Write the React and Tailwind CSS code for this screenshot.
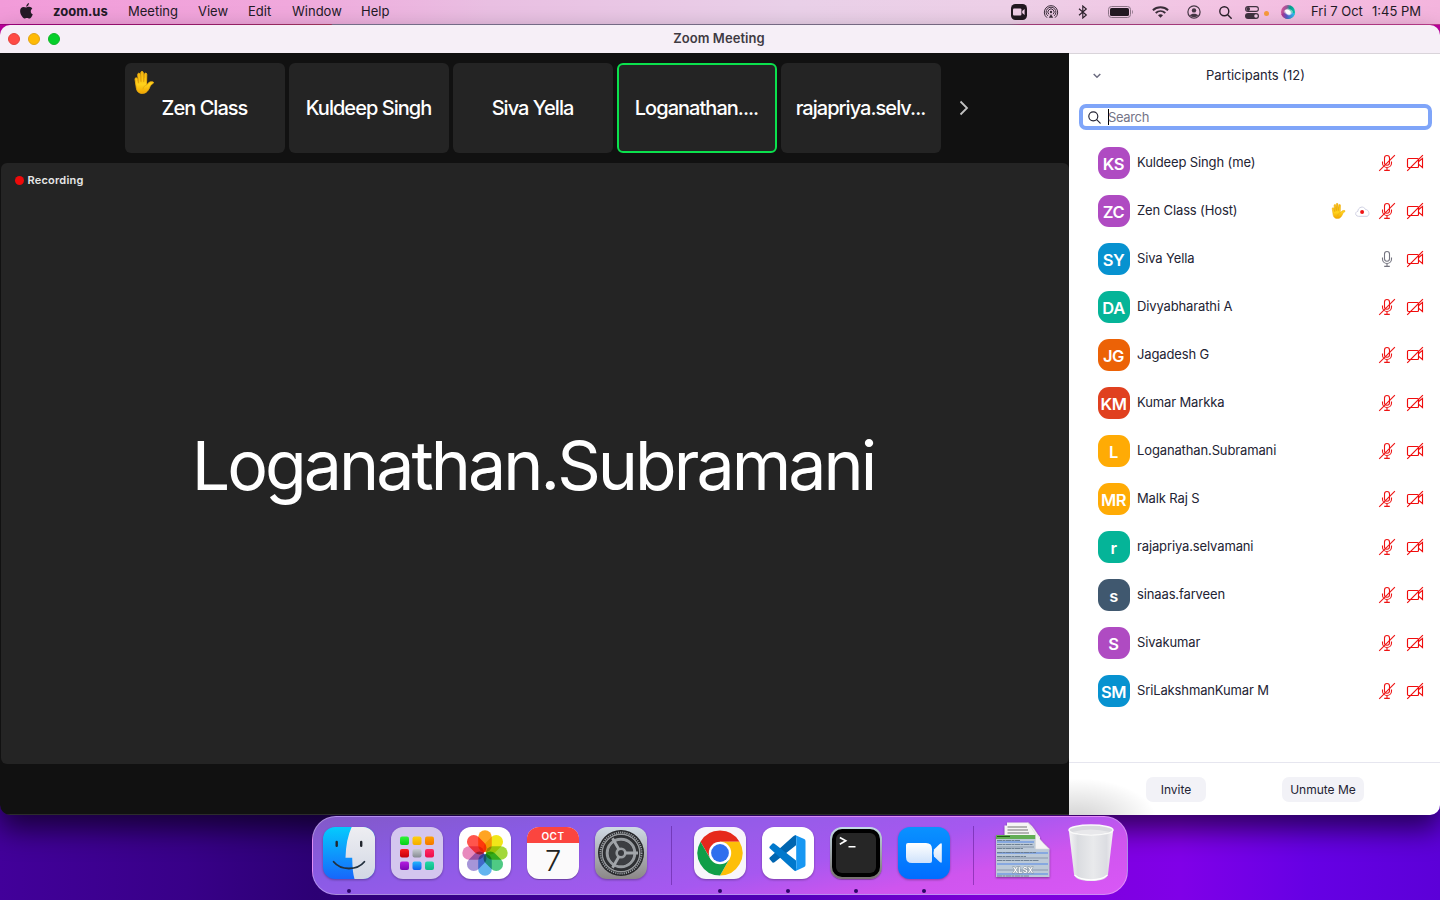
import React from "react";

const FONT = "font-['Inter','Liberation_Sans',sans-serif]";

/* ---------- menu bar icons ---------- */

const Apple = () => (
  <svg width="13" height="16" viewBox="0 0 13 16" fill="#231a26" className="shrink-0">
    <path d="M8.9 0C9 1.100 8.500 2.100 7.900 2.750 7.300 3.400 6.500 3.750 6.300 3.700 6.200 2.700 6.700 1.700 7.200 1.150 7.700.5 8.500.1 8.900 0Z" />
    <path d="M12.300 5.700C11.200 6.400 10.700 7.300 10.800 8.400c0 1.300.8 2.350 2 2.850-.3.900-.7 1.700-1.200 2.450-.7 1-1.300 1.800-2.200 1.800-.9 0-1.300-.5-2.500-.5s-1.600.5-2.500.5c-.9 0-1.600-.9-2.300-1.900C.9 11.800.1 9.800.1 7.900.1 5.300 1.800 3.900 3.500 3.900c1 0 1.900.6 2.700.6.7 0 1.700-.7 3-.7 1.200 0 2.400.7 3.100 1.900Z" />
  </svg>
);

const ZoomGlyph = () => (
  <svg width="16" height="16" viewBox="0 0 16 16" className="shrink-0">
    <rect width="16" height="16" rx="4.500" fill="#211820" />
    <rect x="2" y="4.600" width="8.400" height="6.800" rx="1" fill="#efcde6" />
    <path d="M11.200 7 13.600 5v6l-2.400-2Z" fill="#efcde6" />
  </svg>
);

const AirDrop = () => (
  <svg width="16" height="16" viewBox="0 0 16 16" fill="none" stroke="#3c2f3c" strokeWidth="1" className="shrink-0">
    <path d="M4 13.700A6.700 6.700 0 1 1 12 13.700" />
    <path d="M4.900 11.900A4.900 4.900 0 1 1 11.100 11.900" />
    <path d="M5.900 10.300A3.100 3.100 0 1 1 10.100 10.300" />
    <circle cx="8" cy="8" r="1.200" fill="#3c2f3c" stroke="none" />
    <path d="M8 10 10.200 13.800H5.800Z" fill="#3c2f3c" stroke="none" />
  </svg>
);

const Bluetooth = () => (
  <svg width="10" height="14" viewBox="0 0 10 14" fill="none" stroke="#2c212c" strokeWidth="1.150" className="shrink-0">
    <path d="M1 3.800 8.300 10 4.800 13V1L8.300 4 1 10.200" />
  </svg>
);

const Battery = () => (
  <svg width="26" height="12" viewBox="0 0 26 12" className="shrink-0">
    <rect x=".5" y=".5" width="22" height="11" rx="3" fill="none" stroke="#8d7588" />
    <rect x="2" y="2" width="19" height="8" rx="1.600" fill="#231a23" />
    <path d="M24 4c1.200.5 1.200 3.500 0 4Z" fill="#8d7588" />
  </svg>
);

const Wifi = () => (
  <svg width="17" height="12" viewBox="0 0 17 12" fill="none" stroke="#3a2d39" strokeWidth="1.900" className="shrink-0">
    <path d="M.9 4.200C5 .2 12 .2 16.100 4.200" />
    <path d="M3.700 7C6.500 4.500 10.500 4.500 13.300 7" />
    <path d="M6 9.200c1.500-1.300 3.500-1.300 5 0L8.500 11.800Z" fill="#3a2d39" stroke="none" />
  </svg>
);

const UserCircle = () => (
  <svg width="14" height="14" viewBox="0 0 14 14" className="shrink-0">
    <circle cx="7" cy="7" r="6.100" fill="none" stroke="#463745" strokeWidth="1.200" />
    <circle cx="7" cy="5.400" r="2.200" fill="#463745" />
    <path d="M2.900 10.500C4 8 10 8 11.100 10.500 9 12.600 5 12.600 2.900 10.500Z" fill="#463745" />
  </svg>
);

const Search = ({ color = "#2b202b", thin }) => (
  <svg width="13" height="13" viewBox="0 0 13 13" fill="none" stroke={color} strokeWidth={thin ? 1.15 : 1.4} strokeLinecap="round" className="shrink-0">
    <circle cx="5.300" cy="5.300" r="4.500" />
    <path d="m8.700 8.700 3.500 3.500" />
  </svg>
);

const ControlCentre = () => (
  <svg width="14" height="13" viewBox="0 0 14 13" className="shrink-0">
    <rect x=".6" y=".6" width="12.800" height="4.800" rx="2.400" fill="none" stroke="#403240" strokeWidth="1.100" />
    <circle cx="3.200" cy="3" r="1.900" fill="#403240" />
    <rect y="7" width="14" height="6" rx="3" fill="#403240" />
    <circle cx="11" cy="10" r="1.800" fill="#efc5e4" />
  </svg>
);

const Siri = () => (
  <svg width="14" height="14" viewBox="0 0 14 14" className="shrink-0">
    <defs>
      <linearGradient id="siriA" x1="0" y1="0" x2="1" y2=".3">
        <stop offset="0" stopColor="#e8509c" />
        <stop offset=".4" stopColor="#a05498" />
        <stop offset=".65" stopColor="#0a9a8c" />
        <stop offset="1" stopColor="#06c0a8" />
      </linearGradient>
      <linearGradient id="siriB" x1="0" y1="0" x2="1" y2="0">
        <stop offset="0" stopColor="#c62f83" />
        <stop offset=".4" stopColor="#5a58c8" />
        <stop offset="1" stopColor="#25c8f4" />
      </linearGradient>
    </defs>
    <circle cx="7" cy="7" r="7" fill="url(#siriA)" />
    <path d="M.3 9a7 7 0 0 0 13.400-.5Q7 6 .3 9Z" fill="url(#siriB)" />
    <path d="M2.600 6Q6 2 9 4.200q4 1.500 2.500 4Q9 11.500 6 9.800 2.800 8.500 2.600 6Z" fill="#fff" opacity=".45" />
    <path d="M4 5.300Q7 3.400 9.600 6.300q.8 3.300-1.600 3.500Q4.300 9.200 4 5.300Z" fill="#fff" />
  </svg>
);

/* ---------- meeting icons ---------- */

const Hand = ({ w, h }) => (
  <svg width={w} height={h} viewBox="0 0 20 23" className="shrink-0">
    <defs>
      <linearGradient id="hand" x1="0" y1="0" x2="0" y2="1">
        <stop offset="0" stopColor="#f5b50c" />
        <stop offset=".6" stopColor="#ffd21c" />
        <stop offset="1" stopColor="#f0a400" />
      </linearGradient>
    </defs>
    <path
      d="M1 8.300C.8 6.600 3 6.200 3.400 7.800l1 4.200L3.700 3.600C3.600 1.900 5.800 1.700 6 3.300l.9 7.200L6.800 1.700c0-1.700 2.400-1.700 2.500 0l.4 8.800.8-7.300c.2-1.600 2.400-1.400 2.300.2L12.500 14l1.700-1.800c1.200-1.300 2.800-1.700 4.700-1.300.9.200.8 1.200 0 1.600-1.400.7-2.100 1.500-2.800 2.900-1.700 4-3.500 7-7.800 7-3.300 0-5.300-1.700-5.900-5Z"
      fill="url(#hand)"
      stroke="#f0b010"
      strokeWidth=".9"
    />
    <path d="M4.600 12V7M7.100 10.800V5M9.700 10.800l.2-5M9 18c.3-2.200 1.500-3.500 3.500-4" fill="none" stroke="#d89a08" strokeWidth=".5" strokeLinecap="round" />
  </svg>
);

const Mic = ({ muted }) => {
  const c = muted ? "#ee1414" : "#74747f";
  return (
    <svg width="18" height="18" viewBox="0 0 18 18" fill="none" stroke={c} strokeWidth="1.100" className="shrink-0">
      <rect x="6.500" y="1.500" width="5" height="9.800" rx="2.500" />
      <path d="M4.500 7.500v1.500a4.500 4.500 0 0 0 9 0V7.500M9 13.500v2.800M6.200 16.400h5.600" />
      {muted && <path d="M1.200 16.900 16.900 1.200" />}
    </svg>
  );
};

const CameraOff = () => (
  <svg width="18" height="18" viewBox="0 0 18 18" fill="none" stroke="#f00c0c" strokeWidth="1.150" className="shrink-0">
    <rect x="1.500" y="4.500" width="11" height="9" rx="1" />
    <path d="m12.700 7.500 3.800-3.100v9.100l-3.800-3.100" />
    <path d="M1.200 16.900 16.900 1.200" />
  </svg>
);

const CloudRec = () => (
  <svg width="15" height="11" viewBox="0 0 15 11" className="shrink-0">
    <path d="M3.500 10.300C-.2 10.300-.1 5.600 2.800 5.400 3 1 8.600-.8 10.600 3.600c3.300-.2 4.700 5.500 1.600 6.700Z" fill="#fff" stroke="#cfd0e2" strokeWidth="1" />
    <circle cx="7.100" cy="6" r="2" fill="#ef1515" />
  </svg>
);

/* ---------- dock icons ---------- */

const Svg52 = ({ children }) => (
  <svg width="52" height="52" viewBox="0 0 52 52" className="shrink-0 overflow-visible drop-shadow-[0_1px_1px_rgba(0,0,0,0.3)]">
    {children}
  </svg>
);

const Finder = () => (
  <Svg52>
    <defs>
      <linearGradient id="fb" x1="0" y1="0" x2="0" y2="1">
        <stop offset="0" stopColor="#04cbfd" />
        <stop offset="1" stopColor="#1767fb" />
      </linearGradient>
      <linearGradient id="fw" x1="0" y1="0" x2="0" y2="1">
        <stop offset="0" stopColor="#eeeef2" />
        <stop offset="1" stopColor="#d2d8e4" />
      </linearGradient>
    </defs>
    <rect width="52" height="52" rx="12" fill="url(#fb)" />
    <path d="M28.700 0H40a12 12 0 0 1 12 12v28a12 12 0 0 1-12 12h-8.500Q29.500 46 29.200 30.800H22.500Q23 12 28.700 0Z" fill="url(#fw)" />
    <path d="M10.600 34.800Q16 41.500 26 41.500T41.400 34.800" fill="none" stroke="#22303e" strokeWidth="1.800" strokeLinecap="round" />
    <path d="M13.700 15v3.800M38.200 15v3.800" stroke="#22262e" strokeWidth="2.400" strokeLinecap="round" />
  </Svg52>
);

const TILES = [
  ["#2ff33a", "#07cf17"], ["#ffd010", "#f5ac00"], ["#ffa000", "#f57600"],
  ["#fb1e1e", "#c4000c"], ["#c8ccd2", "#858a92"], ["#ff2a62", "#ec0b4c"],
  ["#b41ce0", "#7d06b4"], ["#22b7fb", "#0b5cf0"], ["#22d8a8", "#0fb886"],
];

const Launchpad = () => (
  <Svg52>
    <rect width="52" height="52" rx="12" fill="#d4c6ee" />
    {TILES.map(([a, b], i) => (
      <g key={i}>
        <linearGradient id={`lp${i}`} x1="0" y1="0" x2="0" y2="1">
          <stop offset="0" stopColor={a} />
          <stop offset="1" stopColor={b} />
        </linearGradient>
        <rect x={9 + (i % 3) * 12.500} y={9.500 + Math.floor(i / 3) * 12.500} width="9" height="8.500" rx="2" fill={`url(#lp${i})`} />
      </g>
    ))}
  </Svg52>
);

const PETALS = ["#ff9a0a", "#f0e400", "#98d424", "#3cc476", "#52acee", "#9c8ad4", "#e67cb6", "#ff4238"];

const Photos = () => (
  <Svg52>
    <rect width="52" height="52" rx="12" fill="#fff" />
    <g className="isolate">
      {PETALS.map((c, i) => (
        <rect key={c} x="19.200" y="3.300" width="13.600" height="22" rx="6.800" fill={c} opacity=".9" transform={`rotate(${i * 45} 26 26)`} className="mix-blend-multiply" />
      ))}
    </g>
    <circle cx="26" cy="26" r="1" fill="#fff" />
  </Svg52>
);

const Calendar = () => (
  <div className="flex h-[52px] w-[52px] shrink-0 flex-col items-center overflow-hidden rounded-[12px] bg-[#fbfafb] shadow-[0_1px_1px_rgba(0,0,0,0.3)]">
    <div className="flex h-[16px] w-full shrink-0 items-center justify-center bg-[#fb453f] pt-[2px] text-[10px] font-semibold leading-[12px] tracking-[0.5px] text-white">OCT</div>
    <div className="text-[29px] font-light leading-[35px] text-[#222]">7</div>
  </div>
);

const Settings = () => (
  <Svg52>
    <defs>
      <linearGradient id="sg" x1="0" y1="0" x2="0" y2="1">
        <stop offset="0" stopColor="#cfdae4" />
        <stop offset="1" stopColor="#8b8787" />
      </linearGradient>
    </defs>
    <rect width="52" height="52" rx="12" fill="url(#sg)" />
    <circle cx="26" cy="26" r="23" fill="#26272a" />
    <circle cx="26" cy="26" r="20.600" fill="none" stroke="#9ba0a5" strokeWidth="1.800" strokeDasharray="1.200 .97" />
    <circle cx="26" cy="26" r="18.800" fill="none" stroke="#96999c" strokeWidth="1.400" />
    <circle cx="26" cy="26" r="17.600" fill="#2e3033" />
    <circle cx="26" cy="26" r="13.800" fill="none" stroke="#989ca0" strokeWidth="3" />
    <circle cx="26" cy="26" r="12" fill="#3c3e42" />
    <circle cx="26" cy="26" r="5.600" fill="#989ca0" />
    <path d="M28 26H43M25 24.300 17.500 11.200M25 27.700 17.500 40.800" stroke="#a2a6aa" strokeWidth="2.800" />
    <circle cx="26" cy="26" r="3" fill="#36383c" />
  </Svg52>
);

const Chrome = () => (
  <Svg52>
    <rect width="52" height="52" rx="12" fill="#f8f5fb" />
    <g transform="translate(26 26)">
      <path d="M-19.500-11.250A22.500 22.500 0 0 1 19.500-11.250H0L-9.700 5.600Z" fill="#e6291c" />
      <path d="M-19.500-11.250A22.500 22.500 0 0 1 19.500-11.250H0L-9.700 5.600Z" fill="#fdbf08" transform="rotate(120)" />
      <path d="M-19.500-11.250A22.500 22.500 0 0 1 19.500-11.250H0L-9.700 5.600Z" fill="#109e48" transform="rotate(240)" />
      <circle r="11.200" fill="#fff" />
      <circle r="8.900" fill="#2f6fee" />
    </g>
  </Svg52>
);

const VSCode = () => (
  <Svg52>
    <rect width="52" height="52" rx="12" fill="#fff" />
    <path d="M7.700 32.200 10.500 35.500Q11.500 36 12.500 35.200L34 18.200V8Q32.500 8 31 9.500L7.700 30.500Q7 31.300 7.700 32.200Z" fill="#0065b0" />
    <path d="M7.700 19.600 10.500 16.500Q11.500 16 12.500 16.700L34 33.500V44Q32.500 44 31 42.500L7.700 21.200Q7 20.500 7.700 19.600Z" fill="#0078cc" />
    <path d="M33 8 42.200 12Q43.500 12.700 43.500 14V38Q43.500 39.300 42.200 40L33 44.200Q34.200 43 34.200 41V11Q34.200 9 33 8Z" fill="#1797f2" />
  </Svg52>
);

const Terminal = () => (
  <div className="h-[52px] w-[52px] shrink-0 rounded-[12px] bg-gradient-to-b from-[#c3dbe6] to-[#77716f] p-[2px] shadow-[0_1px_1px_rgba(0,0,0,0.3)]">
    <div className="h-full w-full rounded-[10px] bg-black p-[4px]">
      <div className="h-full w-full rounded-[6px] bg-[#262626] pl-[3px] pt-[1px]">
        <svg width="18" height="14" viewBox="0 0 18 14" fill="none" stroke="#fff" strokeWidth="1.600">
          <path d="m.8 3.500 6 3.300-6 3.500M9.500 12.700h7" />
        </svg>
      </div>
    </div>
  </div>
);

const ZoomApp = () => (
  <Svg52>
    <defs>
      <linearGradient id="za" x1="0" y1="0" x2="0" y2="1">
        <stop offset="0" stopColor="#0a92ff" />
        <stop offset="1" stopColor="#006dff" />
      </linearGradient>
      <linearGradient id="zw" x1="0" y1="0" x2="0" y2="1">
        <stop offset="0" stopColor="#fff" />
        <stop offset="1" stopColor="#cfe2fb" />
      </linearGradient>
    </defs>
    <rect width="52" height="52" rx="12" fill="url(#za)" />
    <path d="M10 16H28Q34 16 34 22V34Q34 36 32 36H14Q8 36 8 30V18Q8 16 10 16Z" fill="url(#zw)" />
    <path d="M36 22.500 42 16.700Q43.800 15.500 43.800 17.500V34.500Q43.800 36.500 42 35.300L36 29.500Q35 26 36 22.500Z" fill="url(#zw)" />
  </Svg52>
);

const Sheets = () => (
  <svg width="54" height="56" viewBox="0 0 54 56" className="shrink-0 drop-shadow-[0_1px_1px_rgba(0,0,0,0.4)]">
    <path d="M11 .5H32L44 15V30H8.500V3.500H11Z" fill="#f5f5f5" />
    <path d="M11.500 5H31M11.500 8H32M11.500 11H33" stroke="#b4b4b4" strokeWidth="2" />
    <path d="M0 13H40V27H53.500V55H0Z" fill="#bccad8" />
    <path d="M0 13H40V17H0Z" fill="#62ad55" />
    <path d="M1 14.500H14" stroke="#24571d" strokeWidth="1" />
    {[20, 25, 31, 36, 42, 48, 52].map((y, i) => (
      <path key={y} d={`M1 ${y}H${y < 27 ? 38 : 52}`} stroke={i % 2 === 0 ? "#86a8e0" : "#a3b1c2"} strokeWidth="2" />
    ))}
    {[18.5, 22.5, 26.5, 30.5, 34.5, 38.5, 54].map((y, i) => (
      <path key={y} d={`M1 ${y}H${24 + ((i * 13) % 23)}`} stroke="#66788c" strokeWidth=".9" strokeDasharray="5 .5 3 .5" />
    ))}
    <path d="M32 .5Q39 6 43 16 46 20 53.500 27H39.500V12Z" fill="#f4f4f4" stroke="#d4d4d4" strokeWidth=".5" />
    <text x="27" y="50.500" textAnchor="middle" fontSize="7.500" fontWeight="600" letterSpacing=".2" fill="#fff" stroke="#84909b" strokeWidth="1" paintOrder="stroke">XLSX</text>
  </svg>
);

const Trash = () => (
  <svg width="46" height="58" viewBox="0 0 46 58" className="shrink-0">
    <defs>
      <linearGradient id="tr" x1="0" y1="0" x2="1" y2="0">
        <stop offset="0" stopColor="#f5f4f6" />
        <stop offset=".2" stopColor="#dadce0" />
        <stop offset=".55" stopColor="#e9eaec" />
        <stop offset=".85" stopColor="#dcdde2" />
        <stop offset="1" stopColor="#f4f2f5" />
      </linearGradient>
    </defs>
    <path d="M.8 6 6 50Q7 57 23 57T40 50L45.200 6Z" fill="url(#tr)" />
    <path d="M6.500 51Q12 55.800 23 55.800T39.500 51" fill="none" stroke="#fff" strokeWidth="1.200" />
    <ellipse cx="23" cy="6" rx="22" ry="5" fill="#d9dadf" stroke="#fafafa" strokeWidth="1.500" />
    <path d="M4 8Q22 3 42 8 23 13 4 8Z" fill="#e8e8eb" />
  </svg>
);

/* ---------- data ---------- */

const MENUS = [
  ["zoom.us", "w-[55px] mr-[20px] font-bold"],
  ["Meeting", "w-[50px] mr-[20px]"],
  ["View", "w-[30px] mr-[20px]"],
  ["Edit", "w-[24px] mr-[20px]"],
  ["Window", "w-[49px] mr-[20px]"],
  ["Help", "w-[30px]"],
];

const TILE_NAMES = ["Zen Class", "Kuldeep Singh", "Siva Yella", "Loganathan....", "rajapriya.selv..."];

const PEOPLE = [
  { name: "Kuldeep Singh (me)", tag: "KS", bg: "bg-[#af4bc2]" },
  { name: "Zen Class (Host)", tag: "ZC", bg: "bg-[#af4bc2]", host: true },
  { name: "Siva Yella", tag: "SY", bg: "bg-[#0792d0]", live: true },
  { name: "Divyabharathi A", tag: "DA", bg: "bg-[#05b498]" },
  { name: "Jagadesh G", tag: "JG", bg: "bg-[#ec6206]" },
  { name: "Kumar Markka", tag: "KM", bg: "bg-[#e0401f]" },
  { name: "Loganathan.Subramani", tag: "L", bg: "bg-[#ffab05]" },
  { name: "Malk Raj S", tag: "MR", bg: "bg-[#ffab05]" },
  { name: "rajapriya.selvamani", tag: "r", bg: "bg-[#05b498]" },
  { name: "sinaas.farveen", tag: "s", bg: "bg-[#40586f]" },
  { name: "Sivakumar", tag: "S", bg: "bg-[#af4bc2]" },
  { name: "SriLakshmanKumar M", tag: "SM", bg: "bg-[#0792d0]" },
];

/* ---------- sections ---------- */

const MenuBar = () => (
  <header className="flex h-[24px] shrink-0 items-center bg-[linear-gradient(90deg,#f29bd9_0%,#f0a8dc_20%,#e9bfe2_34%,#e9d0e8_55%,#edcfe7_70%,#f3c3e3_85%,#f4b4dd_100%)] pl-[20px] text-[13px] leading-[22px] text-[#231a26]">
    <span className="mb-[2px] flex"><Apple /></span>
    <nav className="mb-[2px] ml-[20px] flex">
      {MENUS.map(([label, cls]) => (
        <span key={label} className={`whitespace-nowrap ${cls}`}>{label}</span>
      ))}
    </nav>
    <div className="ml-auto flex items-center">
      <ZoomGlyph />
      <span className="ml-[16px] flex"><AirDrop /></span>
      <span className="ml-[19px] flex"><Bluetooth /></span>
      <span className="ml-[20px] flex"><Battery /></span>
      <span className="ml-[18px] flex"><Wifi /></span>
      <span className="ml-[18px] flex"><UserCircle /></span>
      <span className="ml-[18px] flex"><Search /></span>
      <span className="ml-[13px] flex"><ControlCentre /></span>
      <span className="ml-[5px] mt-[2px] h-[5px] w-[5px] rounded-full bg-[#f79a3c]" />
      <span className="ml-[12px] flex"><Siri /></span>
      <span className="mb-[2px] ml-[16px] w-[53px] whitespace-nowrap">Fri 7 Oct</span>
      <span className="mb-[2px] ml-[8px] mr-[18px] w-[50px] whitespace-nowrap">1:45 PM</span>
    </div>
  </header>
);

const Stage = () => (
  <main className="flex w-[1069px] shrink-0 flex-col border-b border-[#2c2c2c] bg-[#111] pl-px">
    <div className="flex h-[110px] shrink-0 items-center pl-[124px]">
      <div className="flex gap-[4px]">
        {TILE_NAMES.map((name, i) => (
          <div
            key={name}
            className={`relative flex h-[90px] w-[160px] items-center justify-center rounded-[6px] bg-[#242424] pr-px text-[20px] font-medium tracking-[-0.97px] text-white ${i === 3 ? "border-2 border-[#0be14d]" : ""}`}
          >
            {i === 0 && <span className="absolute left-[9px] top-[8px]"><Hand w={20} height={23} h={23} /></span>}
            {name}
          </div>
        ))}
      </div>
      <svg width="10" height="16" viewBox="0 0 10 16" fill="none" stroke="#c2c2c2" strokeWidth="1.800" className="ml-[18px]">
        <path d="m1.500 1.500 6.500 6.500-6.500 6.500" />
      </svg>
    </div>
    <section className="flex h-[601px] shrink-0 flex-col rounded-[6px] bg-[#242424]">
      <div className="flex h-[34px] shrink-0 items-center pl-[13.5px] text-[11px] font-semibold tracking-[0.22px] text-[#e6e6e6]">
        <span className="mr-[4px] h-[9px] w-[9px] rounded-full bg-[#ee0a0a]" />
        <span>Recording</span>
      </div>
      <div className="flex flex-1 items-center justify-center pb-[32px] pr-[4px] text-[68px] tracking-[-2.95px] text-white">Loganathan.Subramani</div>
    </section>
  </main>
);

const Participants = () => (
  <aside className="flex flex-1 flex-col border-t border-[#d9d4da] bg-white text-[13px] text-[#232333]">
    <div className="grid h-[44px] shrink-0 grid-cols-[56px_1fr_54px] items-center">
      <svg width="8" height="6" viewBox="0 0 8 6" fill="none" stroke="#6e6e82" strokeWidth="1.500" className="ml-[24px]">
        <path d="m.7 1 3.300 3.300L7.300 1" />
      </svg>
      <span className="text-center">Participants (12)</span>
    </div>
    <div className="ml-[10px] mr-[8px] mt-[6px] flex h-[26px] shrink-0 items-center rounded-[7px] border-[4px] border-[#7fa5f9] bg-white pl-[5px]">
      <Search color="#232333" thin />
      <span className="ml-[7px] h-[16px] w-px bg-black" />
      <span className="ml-[-1px] mt-[2px] tracking-[-0.35px] text-[#747487]">Search</span>
    </div>
    <ul className="mt-[9px] flex flex-1 flex-col">
      {PEOPLE.map((p) => (
        <li key={p.name} className="flex h-[48px] shrink-0 items-center pl-[29px] pr-[16px]">
          <span className={`flex h-[32px] w-[32px] items-center justify-center rounded-[11px] pr-px pt-[3px] text-[16.5px] font-semibold tracking-[-0.4px] text-white ${p.bg}`}>{p.tag}</span>
          <span className="ml-[7px] flex-1 whitespace-nowrap tracking-[-0.13px]">{p.name}</span>
          {p.host && (
            <span className="mr-[8px] flex items-center gap-[9px]">
              <Hand w={15} h={16} />
              <CloudRec />
            </span>
          )}
          <Mic muted={!p.live} />
          <span className="ml-[10px] flex"><CameraOff /></span>
        </li>
      ))}
    </ul>
    <footer className="flex h-[53px] shrink-0 items-center border-t border-[#e6e6ef] bg-[radial-gradient(ellipse_80px_42px_at_8px_110%,rgba(0,0,0,0.18),transparent)] pl-[77px] text-[12px]">
      <button className="h-[25px] w-[60px] rounded-[7px] bg-[#f2f2f7] pt-[2px]">Invite</button>
      <button className="ml-[76px] h-[25px] w-[82px] rounded-[7px] bg-[#f2f2f7] pt-[2px]">Unmute Me</button>
    </footer>
  </aside>
);

const Dot = ({ on, children }) => (
  <div className="flex flex-col items-center">
    {children}
    <span className={`mt-[10px] h-[4px] w-[4px] rounded-full ${on ? "bg-[#2b0568]" : "bg-transparent"}`} />
  </div>
);

const Divider = () => <span className="mt-[-1px] h-[59px] w-px bg-[#4a108070]" />;

const Dock = () => (
  <div className="mx-auto mt-px flex h-[79px] w-[816px] shrink-0 items-start rounded-[24px] border border-[#ffffff50] bg-[linear-gradient(168deg,#8259c8_0%,#8a5be6_25%,#9a5bea_45%,#a658f0_60%,#cf55ee_78%,#d957f6_100%)] pl-[10px] pt-[10px]">
    <div className="flex gap-[16px]">
      <Dot on><Finder /></Dot>
      <Dot><Launchpad /></Dot>
      <Dot><Photos /></Dot>
      <Dot><Calendar /></Dot>
      <Dot><Settings /></Dot>
    </div>
    <span className="ml-[24px] mr-[22px] flex"><Divider /></span>
    <div className="flex gap-[16px]">
      <Dot on><Chrome /></Dot>
      <Dot on><VSCode /></Dot>
      <Dot on><Terminal /></Dot>
      <Dot on><ZoomApp /></Dot>
    </div>
    <span className="ml-[23px] mr-[22px] flex"><Divider /></span>
    <span className="mt-[-5px] flex"><Sheets /></span>
    <span className="ml-[18px] mt-[-3px] flex"><Trash /></span>
  </div>
);

export default function App() {
  return (
    <div className={`flex h-[900px] w-[1440px] flex-col overflow-hidden bg-[linear-gradient(90deg,#42009a_0%,#380088_13%,#2c0074_22%,#3f0098_40%,#5200ba_55%,#7c00d6_68%,#8000e8_82%,#6600e4_91%,#5c00d8_100%)] ${FONT}`}>
      <MenuBar />
      <div className="h-px shrink-0 bg-[linear-gradient(90deg,#a10080_0%,#a01f70_15%,#a83a62_23%,#7f7896_23.100%,#80708c_70%,#ab3f80_71%,#c03c90_100%)]" />
      <div className="flex h-[790px] shrink-0 flex-col bg-[linear-gradient(180deg,#c000a0_0%,#c000a0_3%,transparent_3%)]">
        <div className="flex h-full flex-col overflow-hidden rounded-[10px] shadow-[0_14px_28px_rgba(0,0,0,0.6)]">
          <div className="grid h-[28px] shrink-0 grid-cols-[1fr_auto_1fr] items-center bg-[#f6eff7] pl-[8px] text-[13px] font-semibold tracking-[0.08px] text-[#3f3a42]">
            <div className="flex gap-[8px]">
              <span className="h-[12px] w-[12px] rounded-full border border-[#e2433c] bg-[#ff4a44]" />
              <span className="h-[12px] w-[12px] rounded-full border border-[#e0a416] bg-[#ffba05]" />
              <span className="h-[12px] w-[12px] rounded-full border border-[#12b52a] bg-[#06cf2a]" />
            </div>
            <span className="mr-[10px]">Zoom Meeting</span>
          </div>
          <div className="flex flex-1">
            <Stage />
            <Participants />
          </div>
        </div>
      </div>
      <Dock />
    </div>
  );
}
